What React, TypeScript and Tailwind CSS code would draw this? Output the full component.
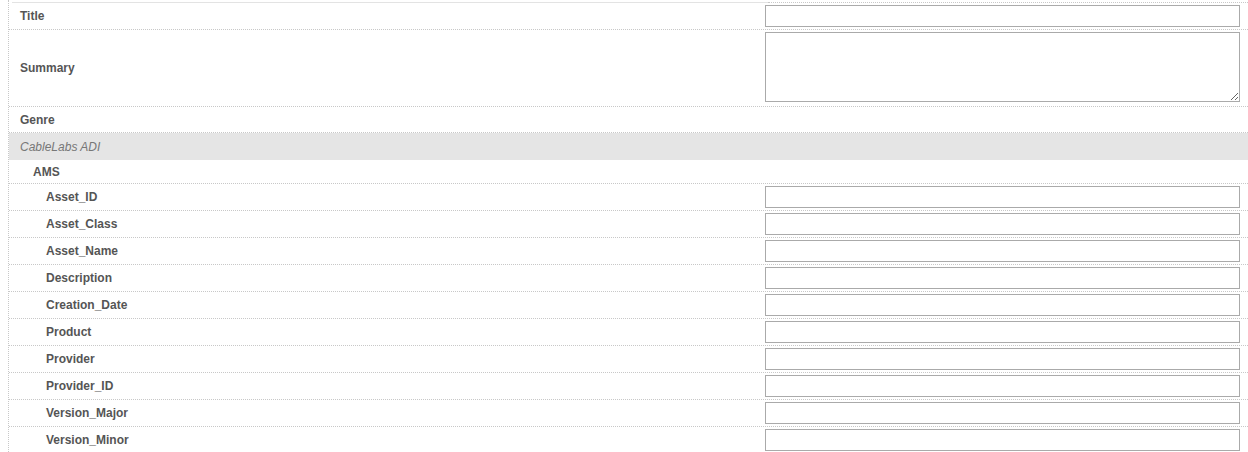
import React from "react";

type Row =
  | { kind: "field"; label: string; depth: number; input?: "text" | "area" }
  | { kind: "group"; label: string; depth: number }
  | { kind: "section"; label: string };

const rows: Row[] = [
  { kind: "field", label: "Title", depth: 0, input: "text" },
  { kind: "field", label: "Summary", depth: 0, input: "area" },
  { kind: "group", label: "Genre", depth: 0 },
  { kind: "section", label: "CableLabs ADI" },
  { kind: "group", label: "AMS", depth: 1 },
  ...[
    "Asset_ID",
    "Asset_Class",
    "Asset_Name",
    "Description",
    "Creation_Date",
    "Product",
    "Provider",
    "Provider_ID",
    "Version_Major",
    "Version_Minor",
  ].map((label) => ({ kind: "field" as const, label, depth: 2, input: "text" as const })),
];

const indent = ["pl-[11px]", "pl-[24px]", "pl-[37px]"];

function MetaRow({ row }: { row: Row }) {
  if (row.kind === "section") {
    return (
      <div className="flex h-[27px] items-center bg-[#e5e5e5] pl-[11px] text-[12px] italic text-[#777]">
        {row.label}
      </div>
    );
  }

  if (row.kind === "group") {
    return (
      <div
        className={`flex items-center border-b border-dotted border-[#c8c8c8] font-bold text-[#555] ${indent[row.depth]} ${
          row.depth === 0 ? "h-[26px]" : "h-[24px]"
        }`}
      >
        {row.label}
      </div>
    );
  }

  const area = row.input === "area";
  return (
    <div
      className={`flex border-b border-dotted border-[#c8c8c8] ${area ? "h-[77px]" : "h-[27px]"}`}
    >
      <div className={`flex flex-1 items-center font-bold text-[#555] ${indent[row.depth]}`}>
        {row.label}
      </div>
      <div className="w-[491px] pl-[8px] pr-[8px] pt-[2px]">
        {area ? (
          <textarea className="block h-[70px] w-full border border-[#aaa] bg-white" />
        ) : (
          <input type="text" className="block h-[22px] w-full border border-[#aaa] bg-white" />
        )}
      </div>
    </div>
  );
}

export default function App() {
  return (
    <div
      className="h-[452px] w-[1248px] overflow-hidden bg-white text-[12px]"
      style={{ fontFamily: '"Liberation Sans", Arial, sans-serif' }}
    >
      <div className="ml-[8px] h-full border-l border-dotted border-[#c8c8c8]">
        <div className="flex h-[3px]">
          <div className="ml-[3px] flex-1 border-t-[2px] border-b border-t-transparent border-b-[#e3e3e3] h-[3px]" />
          <div className="w-[480px] h-[3px] border-b border-dotted border-[#c8c8c8]" />
        </div>
        {rows.map((row) => (
          <MetaRow key={row.label} row={row} />
        ))}
      </div>
    </div>
  );
}
